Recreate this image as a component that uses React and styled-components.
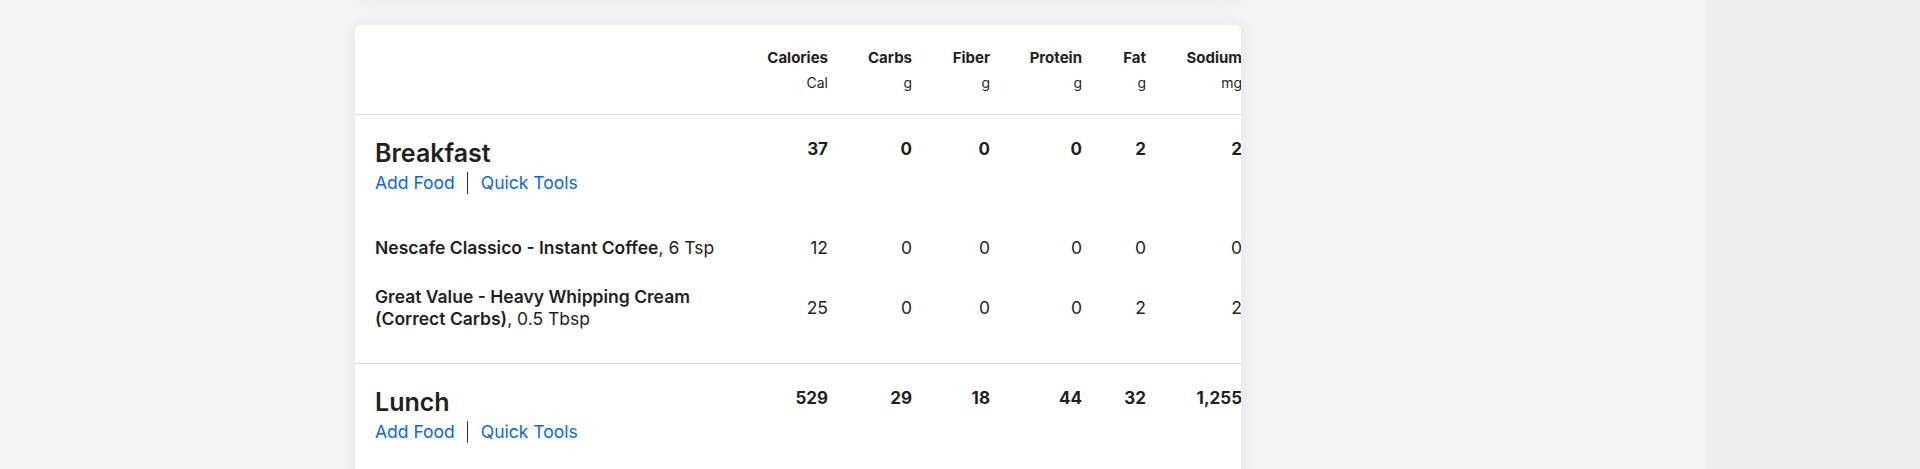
import React from 'react';
import styled, { createGlobalStyle } from 'styled-components';

const GlobalStyle = createGlobalStyle`
  html, body {
    margin: 0;
    padding: 0;
    background: #f4f4f6;
    font-family: Inter, "Noto Sans", "Liberation Sans", sans-serif;
    color: #1f1f1f;
    overflow: hidden;
  }
`;

const columns = [
  { label: 'Calories', unit: 'Cal' },
  { label: 'Carbs', unit: 'g' },
  { label: 'Fiber', unit: 'g' },
  { label: 'Protein', unit: 'g' },
  { label: 'Fat', unit: 'g' },
  { label: 'Sodium', unit: 'mg' },
];

const meals = [
  {
    name: 'Breakfast',
    totals: ['37', '0', '0', '0', '2', '2'],
    items: [
      { name: 'Nescafe Classico - Instant Coffee', amount: '6 Tsp', values: ['12', '0', '0', '0', '0', '0'] },
      { name: 'Great Value - Heavy Whipping Cream (Correct Carbs)', amount: '0.5 Tbsp', values: ['25', '0', '0', '0', '2', '2'] },
    ],
  },
  {
    name: 'Lunch',
    totals: ['529', '29', '18', '44', '32', '1,255'],
    items: [],
  },
];

const App = () => {
  return (
    <Page>
      <GlobalStyle />
      <Main>
        <PrevCard />
        <Card>
          <HeaderRow>
            <div />
            {columns.map((c) => (
              <HeadCell key={c.label}>
                <HeadLabel>{c.label}</HeadLabel>
                <HeadUnit>{c.unit}</HeadUnit>
              </HeadCell>
            ))}
          </HeaderRow>
          {meals.map((meal) => (
            <Section key={meal.name}>
              <MealRow>
                <NameCell>
                  <MealTitle>{meal.name}</MealTitle>
                  <Links>
                    <Link>Add Food</Link>
                    <Divider />
                    <Link>Quick Tools</Link>
                  </Links>
                </NameCell>
                {meal.totals.map((v, i) => (
                  <TotalCell key={i}>{v}</TotalCell>
                ))}
              </MealRow>
              {meal.items.length > 0 && (
                <Items>
                  {meal.items.map((item) => (
                    <ItemRow key={item.name}>
                      <ItemName>
                        <strong>{item.name}</strong>, {item.amount}
                      </ItemName>
                      {item.values.map((v, i) => (
                        <ValueCell key={i}>{v}</ValueCell>
                      ))}
                    </ItemRow>
                  ))}
                </Items>
              )}
            </Section>
          ))}
        </Card>
      </Main>
      <Aside />
    </Page>
  );
};

export default App;

const Page = styled.div`
  display: flex;
  width: 1920px;
  height: 469px;
  overflow: hidden;
`;

const Main = styled.main`
  flex: 1;
  display: flex;
  flex-direction: column;
  gap: 27px;
  padding-left: 355px;
`;

const Aside = styled.aside`
  width: 213px;
  background: #f0f0f1;
`;

const PrevCard = styled.div`
  width: 886px;
  height: 20px;
  margin-top: -22px;
  flex-shrink: 0;
  background: #ffffff;
  border-radius: 6px;
  box-shadow: 0 0 18px rgba(20, 20, 50, 0.07);
`;

const Card = styled.div`
  width: 886px;
  min-height: 500px;
  flex-shrink: 0;
  background: #ffffff;
  border-radius: 6px 6px 0 0;
  box-shadow: 0 0 18px rgba(20, 20, 50, 0.07);
  overflow: hidden;
`;

const gridCols = '393px 80px 84px 78px 92px 64px 96px';

const HeaderRow = styled.div`
  display: grid;
  grid-template-columns: ${gridCols};
  padding: 23px 0 21px;
  border-bottom: 1px solid #dcdcdc;
`;

const HeadCell = styled.div`
  display: flex;
  flex-direction: column;
  align-items: flex-end;
  gap: 5px;
`;

const HeadLabel = styled.span`
  font-size: 15px;
  font-weight: 700;
  line-height: 20px;
`;

const HeadUnit = styled.span`
  font-size: 14px;
  line-height: 20px;
`;

const Section = styled.section`
  padding: 23px 0 20px;
  border-bottom: 1px solid #dcdcdc;

  &:last-child {
    border-bottom: none;
  }
`;

const MealRow = styled.div`
  display: grid;
  grid-template-columns: ${gridCols};
`;

const NameCell = styled.div`
  padding-left: 20px;
`;

const MealTitle = styled.h2`
  margin: 0;
  font-size: 25px;
  font-weight: 600;
  line-height: 30px;
`;

const Links = styled.div`
  display: flex;
  align-items: center;
  margin-top: 3px;
`;

const Link = styled.a`
  font-size: 17.5px;
  line-height: 24px;
  color: #0b66e4;
  cursor: pointer;
`;

const Divider = styled.span`
  width: 1px;
  height: 22px;
  margin: 0 13px 0 12px;
  background: #333333;
`;

const TotalCell = styled.div`
  text-align: right;
  font-size: 17px;
  font-weight: 700;
  line-height: 24px;
  margin-top: -1px;
`;

const Items = styled.div`
  margin-top: 28px;
`;

const ItemRow = styled.div`
  display: grid;
  grid-template-columns: ${gridCols};
  align-items: center;
  padding: 13.5px 0;
`;

const ItemName = styled.div`
  padding: 0 16px 0 20px;
  font-size: 17.5px;
  line-height: 22px;

  strong {
    font-weight: 600;
  }
`;

const ValueCell = styled.div`
  text-align: right;
  font-size: 17.5px;
  line-height: 22px;
`;
